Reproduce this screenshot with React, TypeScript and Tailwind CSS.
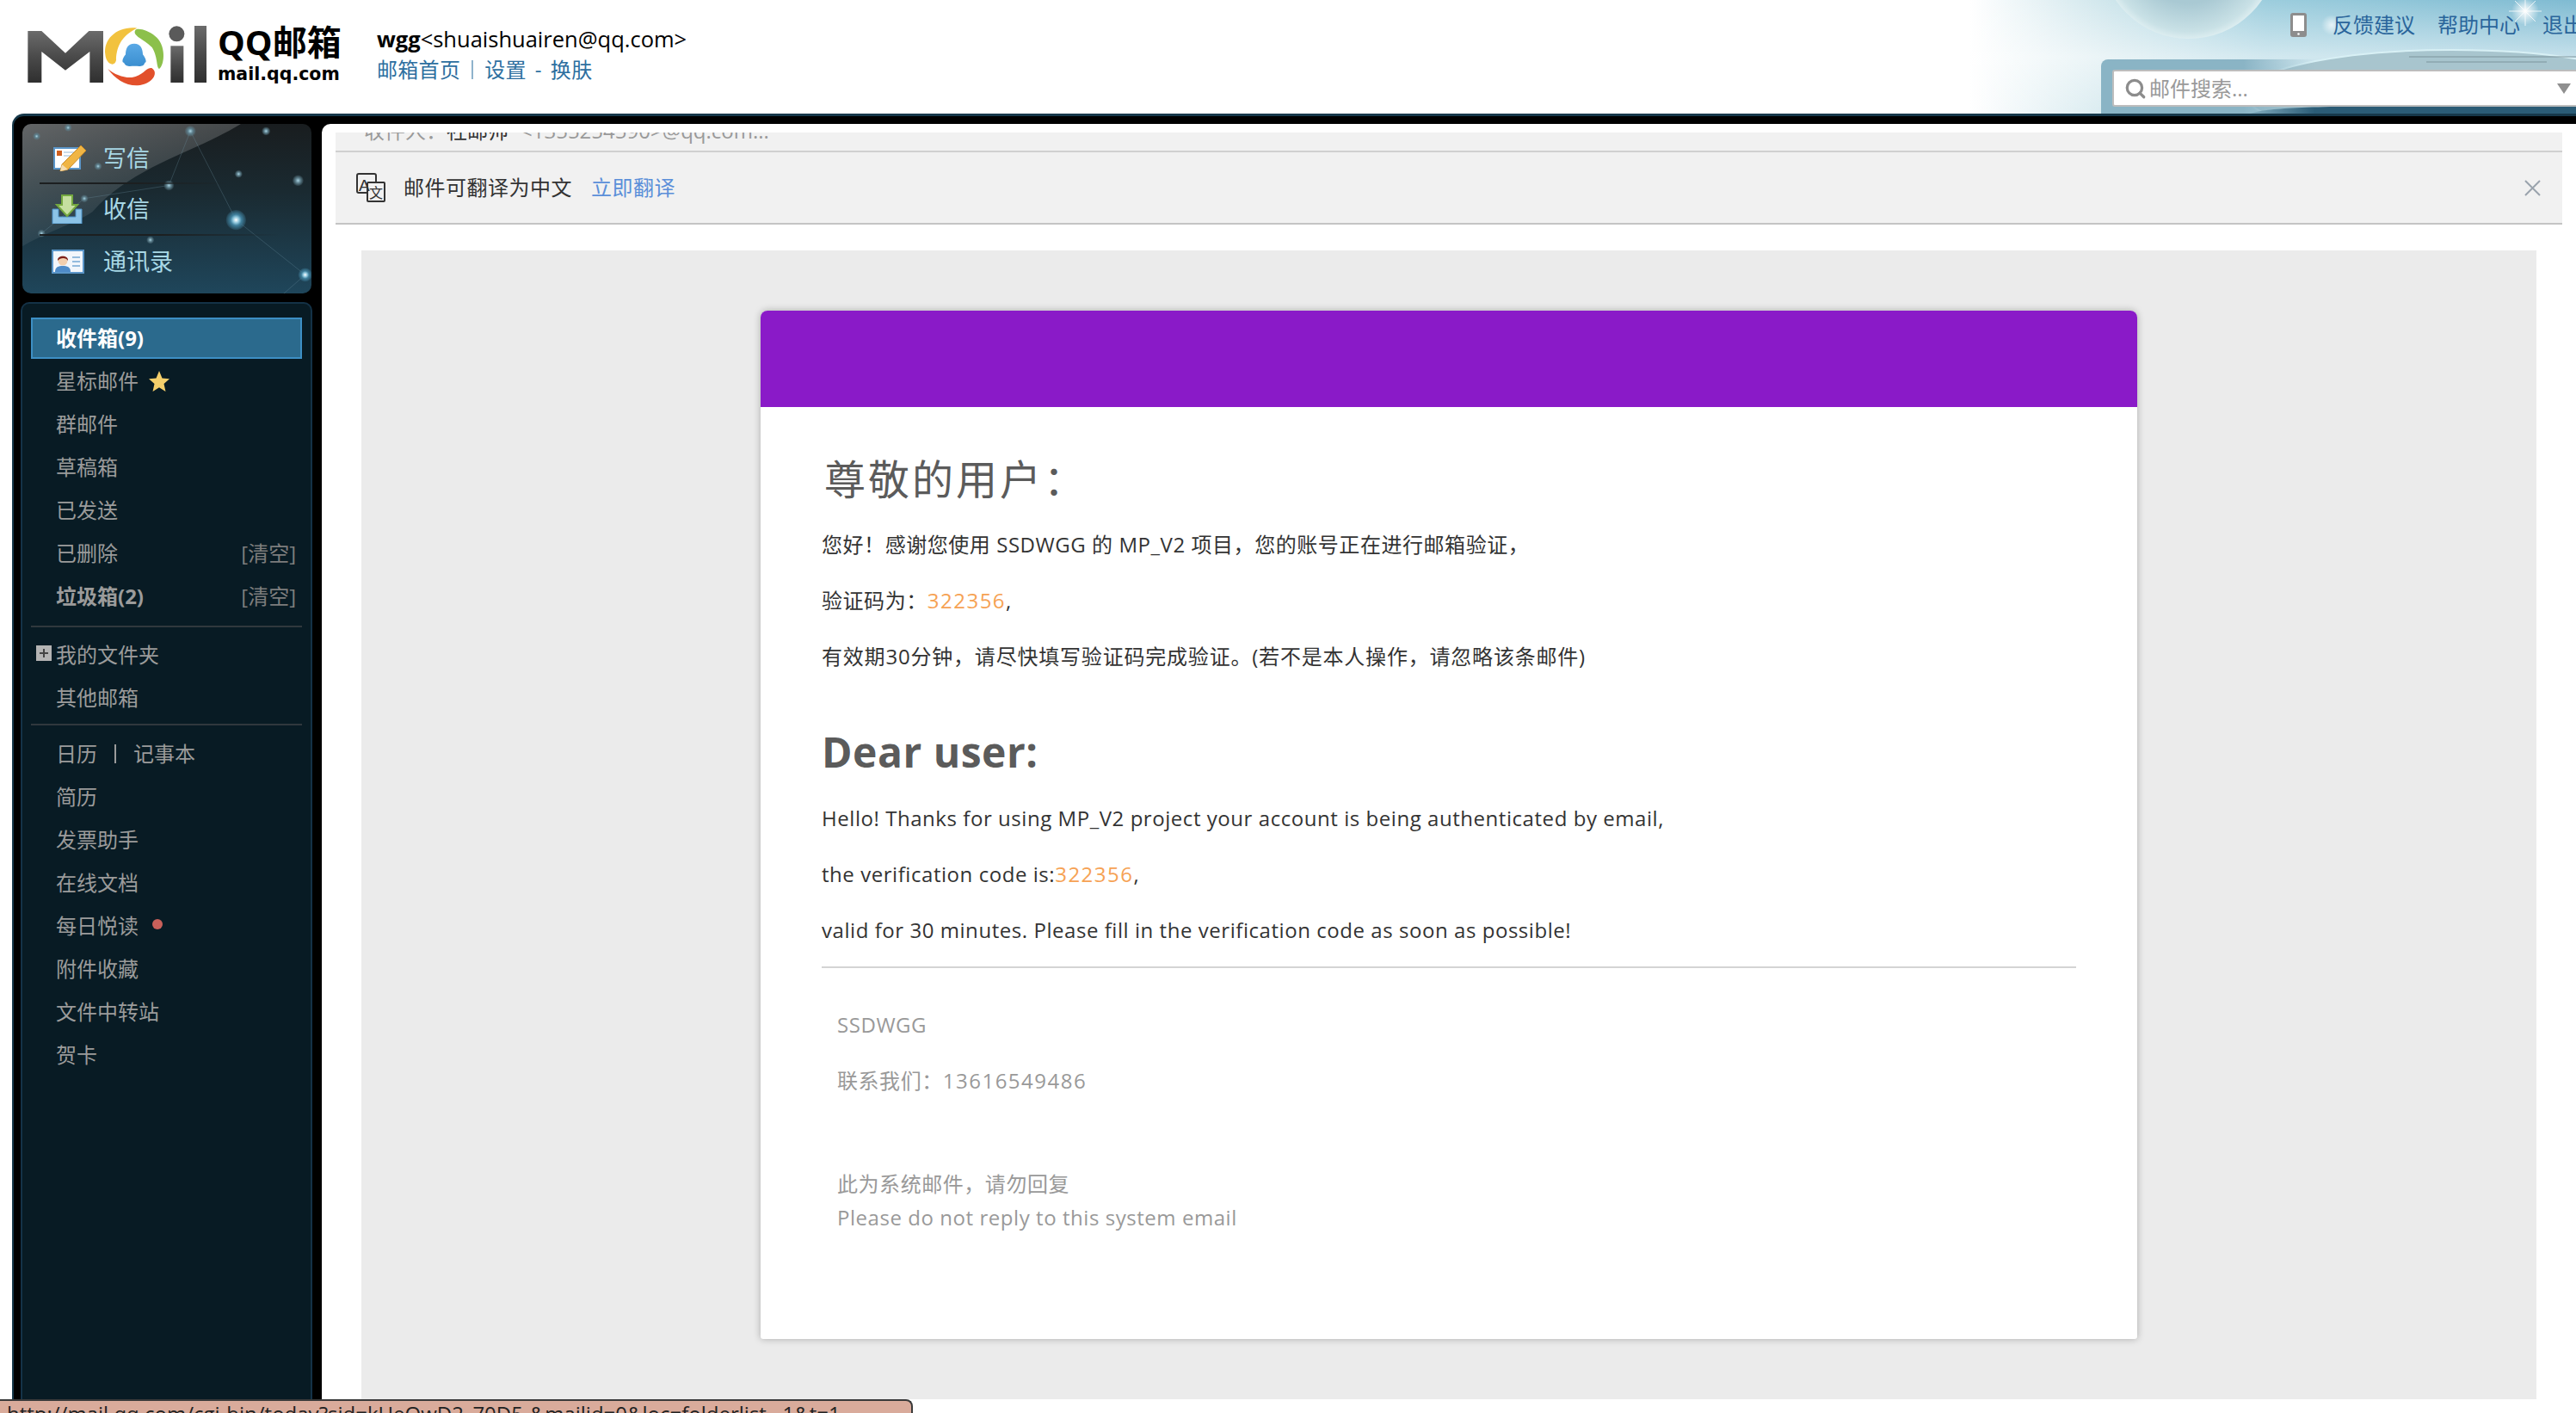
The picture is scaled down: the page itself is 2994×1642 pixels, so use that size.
import { Search } from "lucide-react";

// left folder list, grouped by the divider lines
const mailRows = [
  { label: "星标邮件", star: true },
  { label: "群邮件" },
  { label: "草稿箱" },
  { label: "已发送" },
  { label: "已删除", clear: true },
  { label: "垃圾箱(2)", clear: true, bold: true },
];
const toolRows = ["简历", "发票助手", "在线文档", "每日悦读", "附件收藏", "文件中转站", "贺卡"];

function Logo() {
  return (
    <svg viewBox="36 30 630 210" className="h-[70px] w-[210px] shrink-0">
      <defs>
        <linearGradient id="steel" x1="0" y1="0" x2="0" y2="1">
          <stop offset="0" stopColor="#6b6b6b" />
          <stop offset="0.5" stopColor="#4a4a4a" />
          <stop offset="1" stopColor="#2f2f2f" />
        </linearGradient>
        <linearGradient id="tux" x1="0" y1="0" x2="0" y2="1">
          <stop offset="0" stopColor="#5aa9e6" />
          <stop offset="1" stopColor="#3b8fd0" />
        </linearGradient>
      </defs>
      <path d="M37 48H85L168 125L250 48H300V228H253V120L168 185L85 120V228H37Z" fill="url(#steel)" />
      <path d="M418 38C350 30 300 75 307 130C310 165 340 175 345 150C345 110 360 65 418 38Z" fill="#f2c23e" />
      <path d="M412 45C400 65 440 75 470 105C490 135 485 175 495 180C515 165 520 95 480 65C460 48 420 35 412 45Z" fill="#8cc04b" />
      <path d="M316 180C340 215 380 240 420 238C470 235 495 195 470 178C450 172 440 205 400 210C370 212 340 200 316 180Z" fill="#e2502b" />
      <path d="M408 92C385 92 378 110 378 130C365 145 365 160 372 158C380 175 395 170 408 170C425 170 440 175 445 158C452 160 450 145 438 130C438 110 430 92 408 92Z" fill="url(#tux)" />
      <circle cx="556" cy="58" r="27" fill="#5a5a5a" />
      <rect x="535" y="100" width="45" height="128" fill="url(#steel)" />
      <rect x="618" y="30" width="42" height="198" fill="url(#steel)" />
    </svg>
  );
}

function Sky() {
  return (
    <svg viewBox="2194 0 800 132" className="absolute top-0 right-0 h-[132px] w-[800px]">
      <defs>
        <linearGradient id="sky" x1="0" y1="0" x2="1" y2="0">
          <stop offset="0" stopColor="#ffffff" />
          <stop offset="0.12" stopColor="#ffffff" />
          <stop offset="0.32" stopColor="#cfe6ec" />
          <stop offset="0.55" stopColor="#9ccddd" />
          <stop offset="1" stopColor="#7fbbd2" />
        </linearGradient>
        <linearGradient id="skyFade" x1="0" y1="0" x2="0" y2="1">
          <stop offset="0" stopColor="#ffffff" stopOpacity="0" />
          <stop offset="0.5" stopColor="#ffffff" stopOpacity="0.55" />
          <stop offset="1" stopColor="#ffffff" stopOpacity="0.2" />
        </linearGradient>
        <radialGradient id="moon" cx="0.5" cy="0.5" r="0.5">
          <stop offset="0.6" stopColor="#a9c9d3" />
          <stop offset="0.92" stopColor="#c9e1e6" />
          <stop offset="1" stopColor="#dcedf0" />
        </radialGradient>
        <radialGradient id="glint">
          <stop offset="0" stopColor="#ffffff" />
          <stop offset="1" stopColor="#ffffff" stopOpacity="0" />
        </radialGradient>
      </defs>
      <rect x="2194" y="0" width="800" height="132" fill="url(#sky)" />
      <rect x="2194" y="0" width="800" height="132" fill="url(#skyFade)" />
      <circle cx="2544" cy="-58" r="103" fill="url(#moon)" />
      <ellipse cx="2850" cy="110" rx="240" ry="52" fill="#a8c5ce" />
      <ellipse cx="2850" cy="110" rx="240" ry="52" fill="none" stroke="#d8f0f5" strokeWidth="2" />
      <path d="M2800 66H2994M2820 72H2960" stroke="#7d949c" strokeWidth="1" />
      <path d="M2615 132C2640 124 2700 122 2994 124V132Z" fill="#2b5c76" />
      <circle cx="2935" cy="13" r="16" fill="url(#glint)" />
      <path d="M2935 -4V30M2916 13H2954M2923 1L2947 25M2947 1L2923 25" stroke="#ffffff" strokeWidth="1" opacity="0.8" />
      <circle cx="2710" cy="29" r="12" fill="url(#glint)" opacity="0.7" />
    </svg>
  );
}

function PhoneIcon() {
  return (
    <svg viewBox="0 0 19 28" className="h-[28px] w-[19px] shrink-0">
      <rect width="19" height="28" rx="3" fill="#8d8d8d" />
      <rect x="3" y="3" width="13" height="18" fill="#ffffff" />
      <circle cx="9.5" cy="24.5" r="1.3" fill="#ffffff" />
    </svg>
  );
}

function Constellation() {
  const stars = [
    [65, 65, 9], [175, 35, 9], [603, 47, 13], [868, 47, 10], [280, 170, 9], [528, 237, 12],
    [772, 197, 9], [980, 220, 13], [232, 283, 9], [82, 405, 9], [463, 428, 9],
  ];
  return (
    <svg viewBox="15 22 1012 593" className="absolute inset-0 h-full w-full">
      <defs>
        <linearGradient id="gloss" x1="0" y1="0" x2="0.5" y2="1">
          <stop offset="0" stopColor="#ffffff" stopOpacity="0.32" />
          <stop offset="1" stopColor="#ffffff" stopOpacity="0" />
        </linearGradient>
        <radialGradient id="halo">
          <stop offset="0" stopColor="#ffffff" />
          <stop offset="0.3" stopColor="#8fc6dc" />
          <stop offset="0.55" stopColor="#3f7f9c" />
          <stop offset="1" stopColor="#3f7f9c" stopOpacity="0.2" />
        </radialGradient>
        <radialGradient id="dim">
          <stop offset="0" stopColor="#a9d3e2" />
          <stop offset="0.45" stopColor="#5d7f8c" />
          <stop offset="1" stopColor="#5d7f8c" stopOpacity="0.1" />
        </radialGradient>
      </defs>
      <path d="M15 22H780C600 130 400 170 260 330C200 370 100 400 15 450Z" fill="url(#gloss)" />
      <path d="M603 47L528 237L232 283L82 405M603 47L763 358L1005 550L925 620" stroke="#6f95a5" strokeOpacity="0.45" strokeWidth="2" fill="none" />
      {stars.map(([cx, cy, r]) => (
        <circle key={`${cx}-${cy}`} cx={cx} cy={cy} r={r * 1.5} fill="url(#dim)" />
      ))}
      <circle cx="763" cy="358" r="35" fill="url(#halo)" />
      <circle cx="1005" cy="550" r="24" fill="url(#halo)" />
    </svg>
  );
}

function ComposeIcon() {
  return (
    <svg viewBox="0 0 38 30" className="h-[30px] w-[38px]">
      <rect x="1" y="3" width="30" height="24" fill="#ffffff" stroke="#5b96c9" strokeWidth="2" />
      <rect x="4" y="6" width="6" height="6" fill="#cf5f1f" />
      <path d="M12 8H28M12 12H26" stroke="#b9cfe4" strokeWidth="1.5" />
      <path d="M32 0L38 6L17 28L8 30L10 22Z" fill="#f0b544" stroke="#c98a26" strokeWidth="1" />
      <path d="M10 22L8 30L17 28Z" fill="#f4dcb0" />
    </svg>
  );
}

function InboxIcon() {
  return (
    <svg viewBox="0 0 36 34" className="h-[34px] w-[36px]">
      <path d="M1 17H8V26H28V17H35V34H1Z" fill="#8cc3e6" stroke="#4f93c9" strokeWidth="1" />
      <path d="M12 1H24V12H30L18 25L6 12H12Z" fill="#c5dfa0" stroke="#74a83f" strokeWidth="2" />
    </svg>
  );
}

function ContactIcon() {
  return (
    <svg viewBox="0 0 38 28" className="h-[28px] w-[38px]">
      <rect x="1" y="1" width="36" height="26" fill="#f2f6fb" stroke="#5b96c9" strokeWidth="2" />
      <path d="M4 26C4 20 8 19 13 19C18 19 22 20 22 26Z" fill="#4f8bc8" />
      <circle cx="13" cy="13" r="5.5" fill="#f3cfae" />
      <path d="M7 13C6 6 20 6 19 13C17 9 10 9 7 13Z" fill="#7c1f1a" />
      <path d="M24 9H33M24 14H33M24 19H33" stroke="#94bbdd" strokeWidth="2" />
    </svg>
  );
}

function TranslateIcon() {
  return (
    <svg viewBox="0 0 34 34" className="h-[34px] w-[34px] shrink-0">
      <rect x="1" y="1" width="22" height="22" rx="2" fill="none" stroke="#333333" strokeWidth="2" />
      <rect x="13" y="11" width="20" height="22" rx="1" fill="#f1f1f1" stroke="#333333" strokeWidth="2" />
      <text x="3" y="21" fontSize="19" fill="#333333" fontFamily="Liberation Sans">A</text>
      <text x="15" y="29" fontSize="16" fill="#333333" fontFamily="Noto Sans CJK SC">文</text>
    </svg>
  );
}

function NavRow({ children }: { children: React.ReactNode }) {
  return <div className="flex h-[50px] items-center pl-[29px] pr-[7px] text-[24px] text-[#9b9b9b]">{children}</div>;
}

function Sidebar() {
  return (
    <aside className="flex w-[358px] shrink-0 flex-col pl-[8px] pr-[11px] pt-[9px]">
      <div className="relative ml-[2px] h-[197px] w-[336px] overflow-hidden rounded-[10px] bg-[linear-gradient(to_bottom,#191d1f,#1a2a31_40%,#1f465b)] pt-[10px]">
        <Constellation />
        <div className="relative">
          <div className="flex h-[60px] items-center gap-[20px] pl-[36px] text-[27px] text-[#a8d8e6]"><ComposeIcon />写信</div>
          <div className="-mt-[2px] ml-[20px] h-[2px] w-[220px] bg-[linear-gradient(to_right,#1c1f20,#1c1f20_50%,transparent)]" />
          <div className="flex h-[58px] items-center gap-[24px] pl-[34px] text-[27px] text-[#a8d8e6]"><InboxIcon />收信</div>
          <div className="ml-[20px] h-[2px] w-[280px] bg-[linear-gradient(to_right,#1c1f20,#1c1f20_50%,transparent)]" />
          <div className="flex h-[60px] items-center gap-[22px] pl-[34px] text-[27px] text-[#a8d8e6]"><ContactIcon />通讯录</div>
        </div>
      </div>
      <nav className="mt-[10px] flex-1 rounded-t-[10px] border-x-2 border-t-2 border-[#143247] bg-[#081b24] px-[10px] pt-[16px]">
        <div className="flex h-[48px] items-center border-2 border-[#3d8fc4] bg-[#2b6a8d] pl-[27px] text-[24px] font-bold text-white">收件箱(9)</div>
        <div className="mt-px">
          {mailRows.map((row) => (
            <NavRow key={row.label}>
              <span className={row.bold ? "font-bold" : ""}>{row.label}</span>
              {row.star && (
                <svg viewBox="0 0 24 24" className="ml-[12px] h-[24px] w-[24px]">
                  <path d="M12 0L15.5 8.5L24 9.2L17.5 15L19.5 24L12 19.3L4.5 24L6.5 15L0 9.2L8.5 8.5Z" fill="#f4cf6b" />
                </svg>
              )}
              {row.clear && <span className="ml-auto text-[#7d7d7d]">[清空]</span>}
            </NavRow>
          ))}
        </div>
        <div className="mt-[9px] h-[2px] bg-[#30383d]" />
        <div className="mt-[7px]">
          <div className="relative flex h-[50px] items-center pl-[29px] text-[24px] text-[#9b9b9b]">
            <span className="absolute left-[6px] top-[14px] flex h-[18px] w-[18px] items-center justify-center bg-[#b4b4b4]">
              <span className="relative block h-[10px] w-[2px] bg-[#444444] after:absolute after:left-[-4px] after:top-[4px] after:h-[2px] after:w-[10px] after:bg-[#444444]" />
            </span>
            我的文件夹
          </div>
          <NavRow>其他邮箱</NavRow>
        </div>
        <div className="mt-[5px] h-[2px] bg-[#30383d]" />
        <div className="mt-[8px]">
          <NavRow>
            <span>日历</span>
            <span className="mx-[20px] h-[22px] w-[2px] bg-[#9b9b9b]" />
            <span>记事本</span>
          </NavRow>
          {toolRows.map((label) => (
            <NavRow key={label}>
              {label}
              {label === "每日悦读" && <span className="mb-[4px] ml-[16px] h-[12px] w-[12px] rounded-full bg-[#c9605a]" />}
            </NavRow>
          ))}
        </div>
      </nav>
    </aside>
  );
}

function MailCard() {
  return (
    <div className="mx-auto mt-[70px] h-[1195px] w-[1600px] overflow-hidden rounded-t-[8px] rounded-b-[3px] bg-white shadow-[0_0_8px_rgba(0,0,0,0.28)]">
      <div className="h-[112px] bg-[#8a1ac8]" />
      <div className="px-[71px] pt-[52px] text-[24px] leading-[65px] tracking-[0.55px] text-[#333333]">
        <h2 className="h-[64px] pl-[3px] text-[48px] leading-[64px] font-normal tracking-[3px] text-[#5b5b5b]">尊敬的用户：</h2>
        <div className="mt-[11px]">
          <p>您好！感谢您使用 SSDWGG 的 MP_V2 项目，您的账号正在进行邮箱验证，</p>
          <p>验证码为：<span className="tracking-[1.5px] text-[#f6a254]">322356</span>,</p>
          <p className="tracking-[0.8px]">有效期30分钟，请尽快填写验证码完成验证。(若不是本人操作，请忽略该条邮件)</p>
        </div>
        <h2 className="mt-[47px] h-[64px] text-[48px] leading-[64px] font-bold tracking-[0.5px] text-[#5b5b5b]">Dear user:</h2>
        <div className="mt-[12px]">
          <p>Hello! Thanks for using MP_V2 project your account is being authenticated by email,</p>
          <p>the verification code is:<span className="tracking-[1.5px] text-[#f6a254]">322356</span>,</p>
          <p>valid for 30 minutes. Please fill in the verification code as soon as possible!</p>
        </div>
        <div className="mt-[10px] h-[2px] bg-[#d4d4d4]" />
        <div className="mt-[33px] pl-[18px] text-[#999999]">
          <p>SSDWGG</p>
          <p>联系我们：<span className="tracking-[1.5px]">13616549486</span></p>
          <div className="mt-[68px] leading-[39px]">
            <p>此为系统邮件，请勿回复</p>
            <p>Please do not reply to this system email</p>
          </div>
        </div>
      </div>
    </div>
  );
}

export default function App() {
  return (
    <div className="relative flex h-[1642px] w-[2994px] flex-col overflow-hidden bg-white [font-family:'Open_Sans','Noto_Sans_CJK_SC',sans-serif]">
      <header className="relative flex h-[132px] shrink-0">
        <Sky />
        <div className="relative flex pl-[32px] pt-[30px]">
          <Logo />
          <div className="ml-[11px] -mt-[4px] flex w-[145px] flex-col">
            <div className="text-[40px] leading-[46px] font-bold whitespace-nowrap text-black">QQ邮箱</div>
            <div className="mt-[2px] text-[20.5px] leading-[24px] font-bold text-black [font-family:'DejaVu_Sans',sans-serif]">mail.qq.com</div>
          </div>
          <div className="ml-[40px] -mt-[1px]">
            <div className="text-[25.5px] leading-[32px] text-black"><b>wgg</b>&lt;shuaishuairen@qq.com&gt;</div>
            <div className="mt-[4px] flex h-[32px] items-center text-[24px] tracking-[0.3px] text-[#2d6f9f]">
              邮箱首页
              <span className="mx-[13px] h-[22px] w-[2px] bg-[#8fb3cc]" />
              设置
              <span className="mx-[10px]">-</span>
              换肤
            </div>
          </div>
        </div>
        <div className="relative ml-auto flex w-[552px] flex-col overflow-hidden">
          <div className="flex h-[69px] items-start pl-[220px] pt-[15px] text-[24px] leading-[28px] whitespace-nowrap text-[#2a659b]">
            <PhoneIcon />
            <span className="mx-[15px] mt-[3px] h-[22px] w-[2px] bg-[#a9bcc6]" />
            <span>反馈建议</span>
            <span className="mx-[13px] mt-[3px] h-[22px] w-[2px] bg-[#a9bcc6]" />
            <span>帮助中心</span>
            <span className="mx-[13px] mt-[3px] h-[22px] w-[2px] bg-[#a9bcc6]" />
            <span>退出</span>
          </div>
          <div className="h-[63px] rounded-tl-[8px] bg-[linear-gradient(to_right,#8ab4c5,#8ab4c5_30%,#8ab4c500_45%)] pl-[13px] pt-[12px]">
            <div className="-mr-[8px] flex h-[43px] items-center rounded-[3px] border-2 border-[#bdbdbd] bg-white pl-[12px] pr-[12px] text-[24px] text-[#999999]">
              <Search size={26} strokeWidth={3} color="#8c8c8c" className="shrink-0" />
              <span className="ml-[3px]">邮件搜索...</span>
              <svg viewBox="0 0 16 12" className="ml-auto h-[12px] w-[16px]"><path d="M0 0H16L8 12Z" fill="#8f8f8f" /></svg>
            </div>
          </div>
        </div>
      </header>

      <div className="ml-[14px] flex min-h-0 flex-1 rounded-tl-[14px] border-t-[3px] border-l-[2px] border-[#16384a] bg-black">
        <Sidebar />
        <main className="mt-[9px] flex min-w-0 flex-1 flex-col rounded-tl-[10px] bg-white px-[16px] pt-[10px]">
          <div className="h-[23px] shrink-0 overflow-hidden border-b-2 border-[#d0d0d0] bg-[#f1f1f1] pl-[33px]">
            <div className="-mt-[18px] flex h-[32px] items-center text-[24px] text-[#9a9a9a]">
              收件人：
              <span className="text-[#333333]">社邮帅</span>
              <span className="ml-[14px]">&lt;1355254590&gt;@qq.com...</span>
            </div>
          </div>
          <div className="flex h-[84px] shrink-0 items-center border-b-2 border-[#c4c4c4] bg-[#f1f1f1] pl-[24px] pr-[25px] text-[24px] tracking-[0.5px] text-[#333333]">
            <TranslateIcon />
            <span className="ml-[21px]">邮件可翻译为中文</span>
            <span className="ml-[22px] text-[#5b8fd9]">立即翻译</span>
            <svg viewBox="0 0 19 19" className="ml-auto h-[19px] w-[19px]"><path d="M1 1L18 18M18 1L1 18" stroke="#9aa3ad" strokeWidth="2" /></svg>
          </div>
          <div className="mx-[30px] mt-[30px] mb-[16px] min-h-0 flex-1 overflow-hidden bg-[#ebebeb]">
            <MailCard />
          </div>
        </main>
      </div>

      <div className="absolute bottom-0 left-0 h-[16px] w-[1061px] overflow-hidden rounded-tr-[8px] border-t-2 border-r-2 border-[#3a3a3a] bg-[#d9ab9b] pl-[8px] text-[24px] leading-[30px] whitespace-nowrap text-[#222222]">
        http://mail.qq.com/cgi-bin/today?sid=kUeOwD2_70D5-&amp;mailid=0&amp;loc=folderlist,,,1&amp;t=1
      </div>
    </div>
  );
}
